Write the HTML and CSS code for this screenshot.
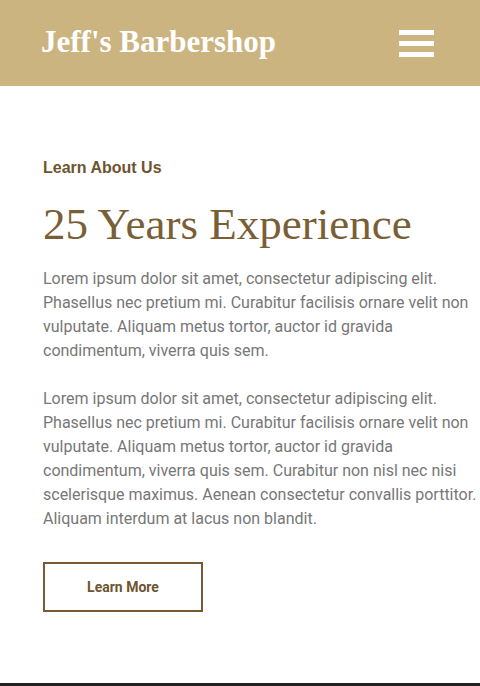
FILE: index.html
```html
<!DOCTYPE html>
<html lang="en">
<head>
<meta charset="utf-8">
<title>Jeff's Barbershop</title>
<link rel="stylesheet" href="styles.css">
</head>
<body>
<header class="site-header">
  <div class="brand">Jeff's Barbershop</div>
  <button class="menu-toggle" aria-label="Menu">
    <span class="bar"></span><span class="bar"></span><span class="bar"></span>
  </button>
</header>
<main class="about">
  <p class="eyebrow">Learn About Us</p>
  <h1 class="title">25 Years Experience</h1>
  <p class="text">Lorem ipsum dolor sit amet, consectetur adipiscing elit. Phasellus nec pretium mi. Curabitur facilisis ornare velit non vulputate. Aliquam metus tortor, auctor id gravida condimentum, viverra quis sem.</p>
  <p class="text">Lorem ipsum dolor sit amet, consectetur adipiscing elit. Phasellus nec pretium mi. Curabitur facilisis ornare velit non vulputate. Aliquam metus tortor, auctor id gravida condimentum, viverra quis sem. Curabitur non nisl nec nisi scelerisque maximus. Aenean consectetur convallis porttitor. Aliquam interdum at lacus non blandit.</p>
  <a class="btn" href="#">Learn More</a>
</main>
<footer class="footer"></footer>
</body>
</html>
```
FILE: styles.css
```css
* { box-sizing: border-box; }
html, body { margin: 0; padding: 0; }
body {
  background: #fff;
  font-family: Roboto, "Liberation Sans", sans-serif;
  width: 480px;
  overflow: hidden;
}
.site-header {
  height: 86px;
  background: #cbb47f;
  display: flex;
  align-items: center;
  justify-content: space-between;
  padding: 0 46px 0 41px;
}
.brand {
  font-family: "Liberation Serif", "Times New Roman", serif;
  font-weight: bold;
  font-size: 31px;
  color: #fff;
  margin-top: -2px;
}
.menu-toggle {
  background: none;
  border: 0;
  padding: 0;
  width: 35px;
  display: flex;
  flex-direction: column;
  gap: 6px;
  cursor: pointer;
}
.bar {
  display: block;
  height: 5px;
  width: 35px;
  background: #fff;
}
.about {
  height: 597px;
  padding: 70px 0 0 43px;
}
.eyebrow {
  margin: 0;
  font-family: "Liberation Sans", Arial, sans-serif;
  font-weight: bold;
  font-size: 16px;
  line-height: 24px;
  color: #6e5430;
}
.title {
  margin: 19px 0 18px;
  font-family: "Liberation Serif", "Times New Roman", serif;
  font-weight: normal;
  font-size: 45px;
  line-height: 50px;
  color: #7a5e35;
}
.text {
  margin: 0 0 24px;
  font-size: 16px;
  line-height: 24px;
  color: #777;
}
.btn {
  margin-top: 31px;
  display: flex;
  align-items: center;
  justify-content: center;
  width: 160px;
  height: 50px;
  border: 2px solid #765a33;
  color: #6e5430;
  font-weight: bold;
  font-size: 14px;
  text-decoration: none;
}
.footer {
  height: 3px;
  background: #222;
}
```
